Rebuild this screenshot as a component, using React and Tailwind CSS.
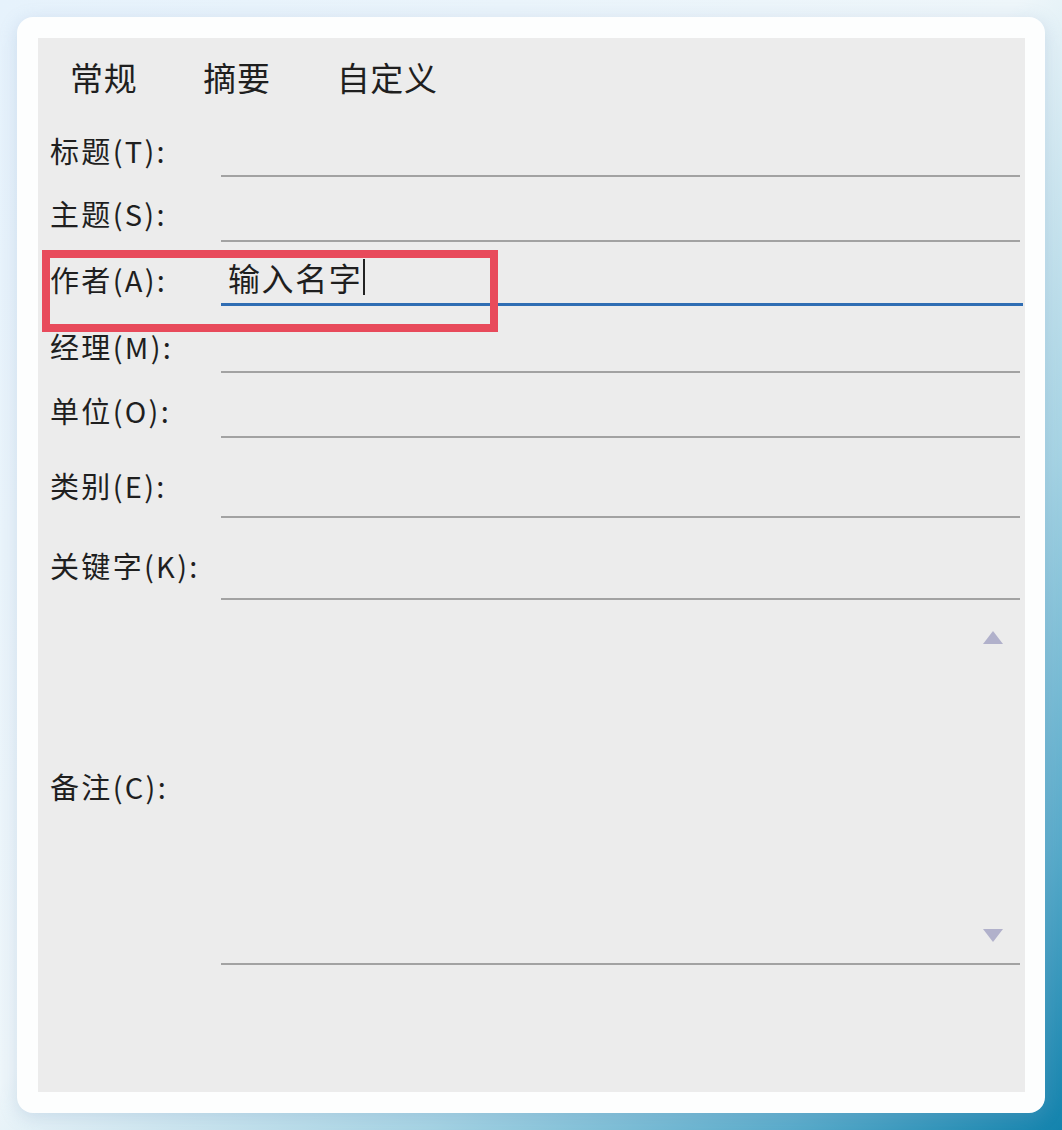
const rows = [
  { label: '标题(T):', h: 'h-[62px]', pb: 'pb-[7px]' },
  { label: '主题(S):', h: 'h-[65px]', pb: 'pb-[9px]' },
  { label: '作者(A):', h: 'h-[64px]', pb: 'pb-[7px]', value: '输入名字', active: true },
  { label: '经理(M):', h: 'h-[67px]', pb: 'pb-[7px]' },
  { label: '单位(O):', h: 'h-[65px]', pb: 'pb-[8px]' },
  { label: '类别(E):', h: 'h-[80px]', pb: 'pb-[13px]' },
  { label: '关键字(K):', h: 'h-[82px]', pb: 'pb-[15px]' },
]

function Field({ label, h, pb, value, active }) {
  return (
    <div className={`flex ${h}`}>
      <div className={`w-[171px] shrink-0 flex items-end ${pb}`}>
        <span className="text-[29px] leading-[40px] tracking-[0.08em] text-[#1f1f1f]">{label}</span>
      </div>
      <div
        className={`flex-1 flex items-end ${
          active ? 'border-b-[3px] border-[#2f6db3] -mr-[3px]' : 'border-b-2 border-[#a2a2a2]'
        }`}
      >
        {value && (
          <div className="flex items-center pl-[7px] pb-[6px]">
            <span className="text-[32px] leading-[40px] tracking-[0.05em] text-[#1f1f1f]">{value}</span>
            <span className="ml-[1px] w-[2px] h-[36px] bg-[#222]" />
          </div>
        )}
      </div>
    </div>
  )
}

export default function App() {
  return (
    <div
      className="w-full min-h-[1130px] p-[17px] bg-[linear-gradient(to_bottom_right,#e6f2fc_0%,#eef6fa_48%,#a6d4e4_70%,#5aaccb_87%,#1383ad_100%)]"
      style={{ fontFamily: '"Microsoft YaHei", "Noto Sans CJK SC", "Noto Sans", sans-serif' }}
    >
      <div className="h-[1096px] rounded-[16px] bg-[#fdfefe] p-[21px] pr-[20px] shadow-[0_4px_18px_rgba(120,150,190,0.25)]">
        <div className="relative h-full bg-[#ececec] pl-[12px] pr-[5px]">
          {/* tabs */}
          <div className="h-[77px] flex items-center gap-[66px] pl-[20px] pt-[2px]">
            {['常规', '摘要', '自定义'].map((t) => (
              <span key={t} className="text-[33px] tracking-[0.02em] text-[#1f1f1f]">
                {t}
              </span>
            ))}
          </div>

          {rows.map((r) => (
            <Field key={r.label} {...r} />
          ))}

          {/* comments */}
          <div className="flex h-[365px]">
            <div className="w-[171px] shrink-0 flex items-center pt-[6px]">
              <span className="text-[29px] leading-[40px] tracking-[0.08em] text-[#1f1f1f]">备注(C):</span>
            </div>
            <div className="flex-1 border-b-2 border-[#a2a2a2] flex flex-col items-end justify-between pt-[30px] pb-[20px] pr-[16px]">
              <svg width="22" height="16" viewBox="0 0 22 16">
                <path d="M11 1 L21 14 L1 14 Z" fill="#b1b1cb" />
              </svg>
              <svg width="22" height="16" viewBox="0 0 22 16">
                <path d="M1 2 L21 2 L11 15 Z" fill="#b1b1cb" />
              </svg>
            </div>
          </div>

          {/* highlight box */}
          <div className="absolute left-[4px] top-[212px] w-[456px] h-[82px] border-[8px] border-[#e84a5b]" />
        </div>
      </div>
    </div>
  )
}
